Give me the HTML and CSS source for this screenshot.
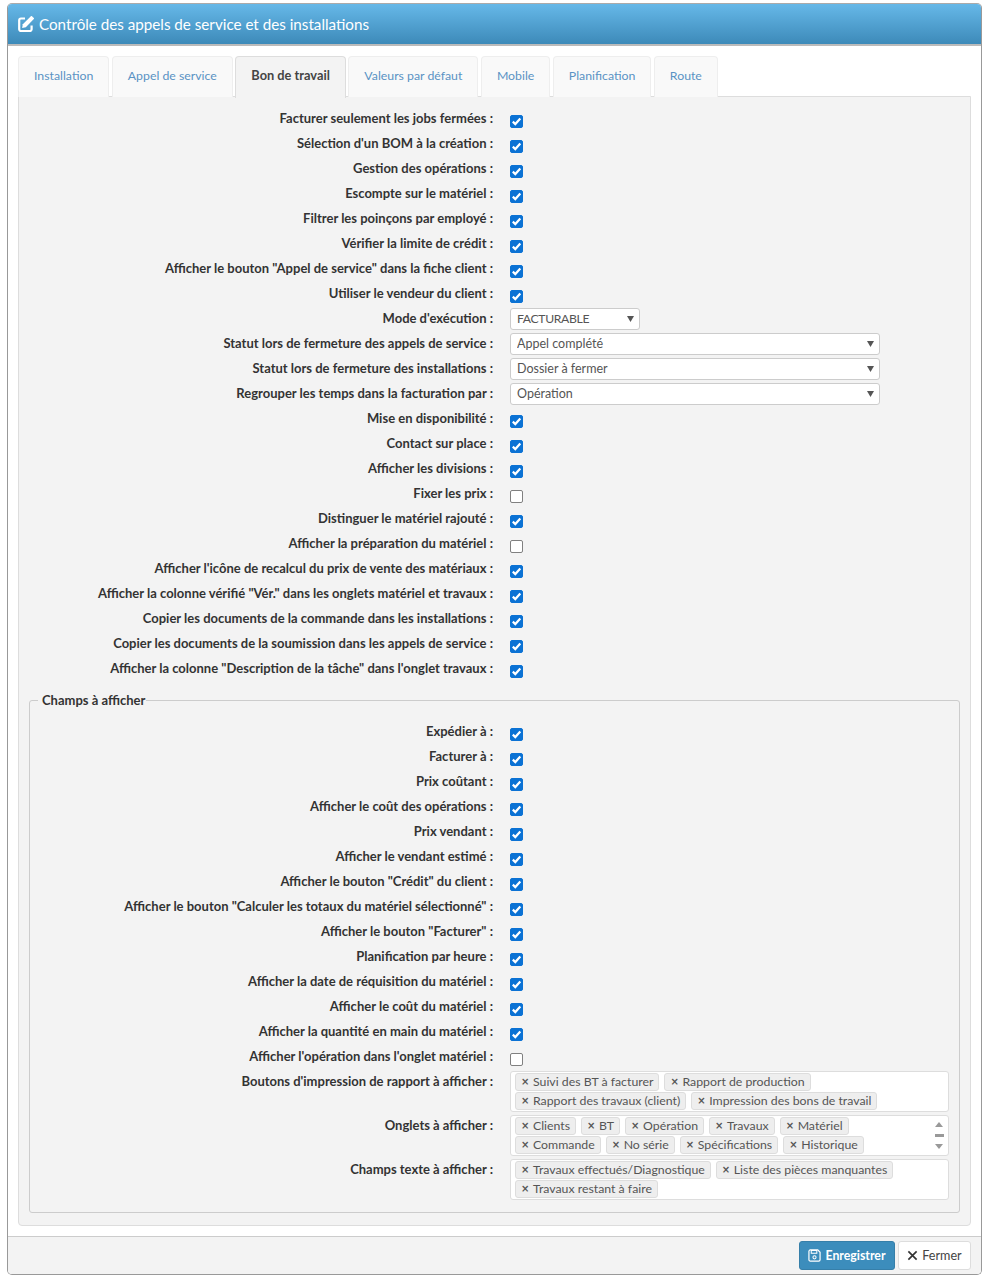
FILE: index.html
```html
<!DOCTYPE html>
<html lang="fr">
<head>
    <meta charset="UTF-8">
    <title>Contrôle des appels de service et des installations</title>
    <link rel="stylesheet" href="styles.css">
</head>
<body>
    <div class="dialog">
        <!-- Title -->
        <div class="dialog-title">
            <svg class="title-icon" viewBox="0 0 16 16" width="16" height="16">
                <path d="M7 2.500H3A1.800 1.800 0 0 0 1.200 4.300v8.900A1.800 1.800 0 0 0 3 15h8.800a1.800 1.800 0 0 0 1.800-1.800V9.500" fill="none" stroke="#fff" stroke-width="2.200"/>
                <path d="M12.900.2a.8.800 0 0 1 1.100 0l1.800 1.800a.8.800 0 0 1 0 1.100l-8 8.100-3.700.7.700-3.700z" fill="#fff"/>
            </svg>
            <span>Contrôle des appels de service et des installations</span>
        </div>

        <div class="dialog-body">
            <!-- Tabs -->
            <ul class="tabs">
                <li><a href="#">Installation</a></li>
                <li><a href="#">Appel de service</a></li>
                <li class="active"><a href="#">Bon de travail</a></li>
                <li><a href="#">Valeurs par défaut</a></li>
                <li><a href="#">Mobile</a></li>
                <li><a href="#">Planification</a></li>
                <li><a href="#">Route</a></li>
            </ul>

            <div class="tab-panel">
                <div class="row"><label>Facturer seulement les jobs fermées :</label><input type="checkbox" checked></div>
                <div class="row"><label>Sélection d'un BOM à la création :</label><input type="checkbox" checked></div>
                <div class="row"><label>Gestion des opérations :</label><input type="checkbox" checked></div>
                <div class="row"><label>Escompte sur le matériel :</label><input type="checkbox" checked></div>
                <div class="row"><label>Filtrer les poinçons par employé :</label><input type="checkbox" checked></div>
                <div class="row"><label>Vérifier la limite de crédit :</label><input type="checkbox" checked></div>
                <div class="row"><label>Afficher le bouton "Appel de service" dans la fiche client :</label><input type="checkbox" checked></div>
                <div class="row"><label>Utiliser le vendeur du client :</label><input type="checkbox" checked></div>
                <div class="row"><label>Mode d'exécution :</label><select class="select-small"><option>FACTURABLE</option></select></div>
                <div class="row"><label>Statut lors de fermeture des appels de service :</label><select class="select-large"><option>Appel complété</option></select></div>
                <div class="row"><label>Statut lors de fermeture des installations :</label><select class="select-large"><option>Dossier à fermer</option></select></div>
                <div class="row"><label>Regrouper les temps dans la facturation par :</label><select class="select-large"><option>Opération</option></select></div>
                <div class="row"><label>Mise en disponibilité :</label><input type="checkbox" checked></div>
                <div class="row"><label>Contact sur place :</label><input type="checkbox" checked></div>
                <div class="row"><label>Afficher les divisions :</label><input type="checkbox" checked></div>
                <div class="row"><label>Fixer les prix :</label><input type="checkbox"></div>
                <div class="row"><label>Distinguer le matériel rajouté :</label><input type="checkbox" checked></div>
                <div class="row"><label>Afficher la préparation du matériel :</label><input type="checkbox"></div>
                <div class="row"><label>Afficher l'icône de recalcul du prix de vente des matériaux :</label><input type="checkbox" checked></div>
                <div class="row"><label>Afficher la colonne vérifié "Vér." dans les onglets matériel et travaux :</label><input type="checkbox" checked></div>
                <div class="row"><label>Copier les documents de la commande dans les installations :</label><input type="checkbox" checked></div>
                <div class="row"><label>Copier les documents de la soumission dans les appels de service :</label><input type="checkbox" checked></div>
                <div class="row"><label>Afficher la colonne "Description de la tâche" dans l'onglet travaux :</label><input type="checkbox" checked></div>

                <!-- Champs a afficher -->
                <fieldset class="fields">
                    <legend>Champs à afficher</legend>
                    <div class="row"><label>Expédier à :</label><input type="checkbox" checked></div>
                    <div class="row"><label>Facturer à :</label><input type="checkbox" checked></div>
                    <div class="row"><label>Prix coûtant :</label><input type="checkbox" checked></div>
                    <div class="row"><label>Afficher le coût des opérations :</label><input type="checkbox" checked></div>
                    <div class="row"><label>Prix vendant :</label><input type="checkbox" checked></div>
                    <div class="row"><label>Afficher le vendant estimé :</label><input type="checkbox" checked></div>
                    <div class="row"><label>Afficher le bouton "Crédit" du client :</label><input type="checkbox" checked></div>
                    <div class="row"><label>Afficher le bouton "Calculer les totaux du matériel sélectionné" :</label><input type="checkbox" checked></div>
                    <div class="row"><label>Afficher le bouton "Facturer" :</label><input type="checkbox" checked></div>
                    <div class="row"><label>Planification par heure :</label><input type="checkbox" checked></div>
                    <div class="row"><label>Afficher la date de réquisition du matériel :</label><input type="checkbox" checked></div>
                    <div class="row"><label>Afficher le coût du matériel :</label><input type="checkbox" checked></div>
                    <div class="row"><label>Afficher la quantité en main du matériel :</label><input type="checkbox" checked></div>
                    <div class="row"><label>Afficher l'opération dans l'onglet matériel :</label><input type="checkbox"></div>

                    <div class="row row-multi">
                        <label>Boutons d'impression de rapport à afficher :</label>
                        <div class="multi">
                            <div class="tags">
                                <span class="tag"><b>×</b>Suivi des BT à facturer</span>
                                <span class="tag"><b>×</b>Rapport de production</span>
                                <span class="tag"><b>×</b>Rapport des travaux (client)</span>
                                <span class="tag"><b>×</b>Impression des bons de travail</span>
                            </div>
                        </div>
                    </div>
                    <div class="row row-multi">
                        <label>Onglets à afficher :</label>
                        <div class="multi">
                            <div class="tags">
                                <span class="tag"><b>×</b>Clients</span>
                                <span class="tag"><b>×</b>BT</span>
                                <span class="tag"><b>×</b>Opération</span>
                                <span class="tag"><b>×</b>Travaux</span>
                                <span class="tag"><b>×</b>Matériel</span>
                                <span class="tag"><b>×</b>Commande</span>
                                <span class="tag"><b>×</b>No série</span>
                                <span class="tag"><b>×</b>Spécifications</span>
                                <span class="tag"><b>×</b>Historique</span>
                            </div>
                            <div class="scroller">
                                <i class="arrow-up"></i>
                                <i class="thumb"></i>
                                <i class="arrow-down"></i>
                            </div>
                        </div>
                    </div>
                    <div class="row row-multi">
                        <label>Champs texte à afficher :</label>
                        <div class="multi">
                            <div class="tags">
                                <span class="tag"><b>×</b>Travaux effectués/Diagnostique</span>
                                <span class="tag"><b>×</b>Liste des pièces manquantes</span>
                                <span class="tag"><b>×</b>Travaux restant à faire</span>
                            </div>
                        </div>
                    </div>
                </fieldset>
            </div>
        </div>

        <!-- Footer -->
        <div class="dialog-footer">
            <button class="btn btn-primary">
                <svg viewBox="0 0 14 14" width="13" height="13">
                    <path d="M2.500 1h8L13 3.500v8a1.500 1.500 0 0 1-1.500 1.500h-9A1.500 1.500 0 0 1 1 11.500v-9A1.500 1.500 0 0 1 2.500 1z" fill="none" stroke="#fff" stroke-width="1.300"/>
                    <path d="M3.500 1.500h6v3h-6z" fill="none" stroke="#fff" stroke-width="1.100"/>
                    <circle cx="7" cy="9" r="1.700" fill="none" stroke="#fff" stroke-width="1.100"/>
                </svg>
                Enregistrer
            </button>
            <button class="btn btn-close">
                <svg viewBox="0 0 12 12" width="11" height="11">
                    <path d="M1.500 1.500l9 9M10.500 1.500l-9 9" fill="none" stroke="#333" stroke-width="1.800"/>
                </svg>
                Fermer
            </button>
        </div>
    </div>
</body>
</html>
```

FILE: styles.css
```css
/* Global */
body {
    margin: 0;
    padding: 3px 4px 0 7px;
    background-color: #fff;
    font-family: 'Lato', 'Noto Sans', sans-serif;
    font-size: 13px;
    color: #555;
}

/* Dialog */
.dialog {
    border: 1px solid #999;
    border-top-color: #aaa;
    border-radius: 5px;
    height: 1270px;
    display: flex;
    flex-direction: column;
}

.dialog-title {
    display: flex;
    align-items: center;
    gap: 5px;
    height: 40px;
    padding: 0 10px;
    background: linear-gradient(to bottom, #66b8e8, #3d8ab9);
    border-bottom: 2px solid #bbb;
    border-radius: 4px 4px 0 0;
    color: #fff;
    font-size: 15.200px;
}

.title-icon {
    flex: none;
}

.dialog-body {
    flex: 1;
    padding: 10px;
}

/* Tabs */
.tabs {
    display: flex;
    gap: 2.500px;
    list-style: none;
    margin: 0;
    padding: 0;
    height: 41px;
    position: relative;
    z-index: 1;
}

.tabs li {
    height: 40px;
    border: 1px solid #eee;
    border-bottom: none;
    border-radius: 4px 4px 0 0;
    background-color: #f9f9f9;
}

.tabs li a {
    display: block;
    padding: 0 15px;
    line-height: 37px;
    font-size: 12.300px;
    color: #5a93c4;
    text-decoration: none;
}

.tabs li.active {
    height: 41px;
    border-color: #ddd;
    background-color: #f3f3f3;
}

.tabs li.active a {
    font-size: 12.800px;
    color: #444;
    font-weight: bold;
}

.tab-panel {
    margin-top: -1px;
    height: 1130px;
    box-sizing: border-box;
    padding: 10px 10px 0 10px;
    background-color: #f3f3f3;
    border: 1px solid #ddd;
    border-radius: 0 0 4px 4px;
}

/* Form rows */
.row {
    display: flex;
    align-items: center;
    height: 25px;
}

.row label {
    flex: none;
    width: 464px;
    margin-right: 17px;
    text-align: right;
    font-weight: bold;
    color: #333;
    position: relative;
    top: -2px;
}

.row input[type="checkbox"] {
    appearance: none;
    box-sizing: border-box;
    margin: 3px 0 0 0;
    width: 13px;
    height: 13px;
    background-color: #fff;
    border: 1px solid #808080;
    border-radius: 2px;
}

.row input[type="checkbox"]:checked {
    border-color: #0b72d4;
    background: #0b72d4 url("data:image/svg+xml,%3Csvg xmlns='http://www.w3.org/2000/svg' width='11' height='11'%3E%3Cpath d='M1.800 5.600l2.500 2.500 5-5.600' fill='none' stroke='%23fff' stroke-width='2.200'/%3E%3C/svg%3E") no-repeat center;
}

select {
    appearance: none;
    height: 22px;
    margin-bottom: 1px;
    padding: 0 6px 2px 6px;
    background: #fff url("data:image/svg+xml,%3Csvg xmlns='http://www.w3.org/2000/svg' width='7' height='6'%3E%3Cpath d='M0 0h7L3.500 6z' fill='%23555'/%3E%3C/svg%3E") no-repeat right 5px center;
    border: 1px solid #ccc;
    border-radius: 3px;
    font-family: inherit;
    font-size: 12.500px;
    color: #555;
}

.select-small {
    width: 130px;
    font-size: 12.200px;
    letter-spacing: -0.350px;
}

.select-large {
    width: 370px;
}

/* Fieldset */
.fields {
    margin: 10px 0 0 0;
    padding: 12px 0 0 0;
    height: 521px;
    box-sizing: border-box;
    border: 1px solid #ccc;
    border-radius: 3px;
}

.fields legend {
    margin-left: 8px;
    padding: 0 1px 0 4px;
    font-weight: bold;
    color: #333;
}

.fields .row label {
    width: 463px;
}

/* Tag select */
.row-multi {
    height: 41px;
    margin: 1px 0 3px 0;
    align-items: flex-start;
}

.row-multi label {
    top: 2px;
}

.multi {
    display: flex;
    width: 439px;
    height: 41px;
    box-sizing: border-box;
    background-color: #fff;
    border: 1px solid #ddd;
    border-radius: 3px;
}

.tags {
    flex: 1;
    display: flex;
    flex-wrap: wrap;
    align-content: flex-start;
    gap: 1px 5px;
    padding: 1px 0 0 4px;
}

.tag {
    display: flex;
    align-items: center;
    box-sizing: border-box;
    height: 18px;
    padding: 0 5px 2px 5px;
    background-color: #eee;
    border: 1px solid #ddd;
    border-radius: 3px;
    font-size: 12.300px;
}

.tag b {
    width: 6px;
    margin-right: 6px;
    font-family: 'DejaVu Sans', sans-serif;
    font-size: 10px;
    color: #555;
}

.scroller {
    flex: none;
    width: 18px;
    display: flex;
    flex-direction: column;
    align-items: center;
    justify-content: space-between;
    padding: 6px 0 6px 0;
}

.arrow-up {
    border: 4.500px solid transparent;
    border-top: none;
    border-bottom: 5px solid #999;
}

.arrow-down {
    border: 4.500px solid transparent;
    border-bottom: none;
    border-top: 5px solid #999;
}

.thumb {
    width: 9px;
    height: 3px;
    background-color: #999;
}

/* Footer */
.dialog-footer {
    display: flex;
    justify-content: flex-end;
    align-items: center;
    gap: 3px;
    height: 37px;
    padding: 0 10px 0 0;
    background-color: #f3f3f3;
    border-top: 1px solid #ccc;
    border-radius: 0 0 4px 4px;
}

.btn {
    display: flex;
    align-items: center;
    justify-content: center;
    gap: 4px;
    height: 29px;
    padding: 0;
    background-color: #fff;
    border: 1px solid #ddd;
    border-radius: 3px;
    font-family: inherit;
    font-size: 12.600px;
    color: #444;
}

.btn-primary {
    width: 96px;
    background-color: #3c8dbc;
    border-color: #367fa9;
    color: #fff;
    font-size: 12.300px;
    font-weight: bold;
}

.btn-close {
    width: 73px;
}
```
